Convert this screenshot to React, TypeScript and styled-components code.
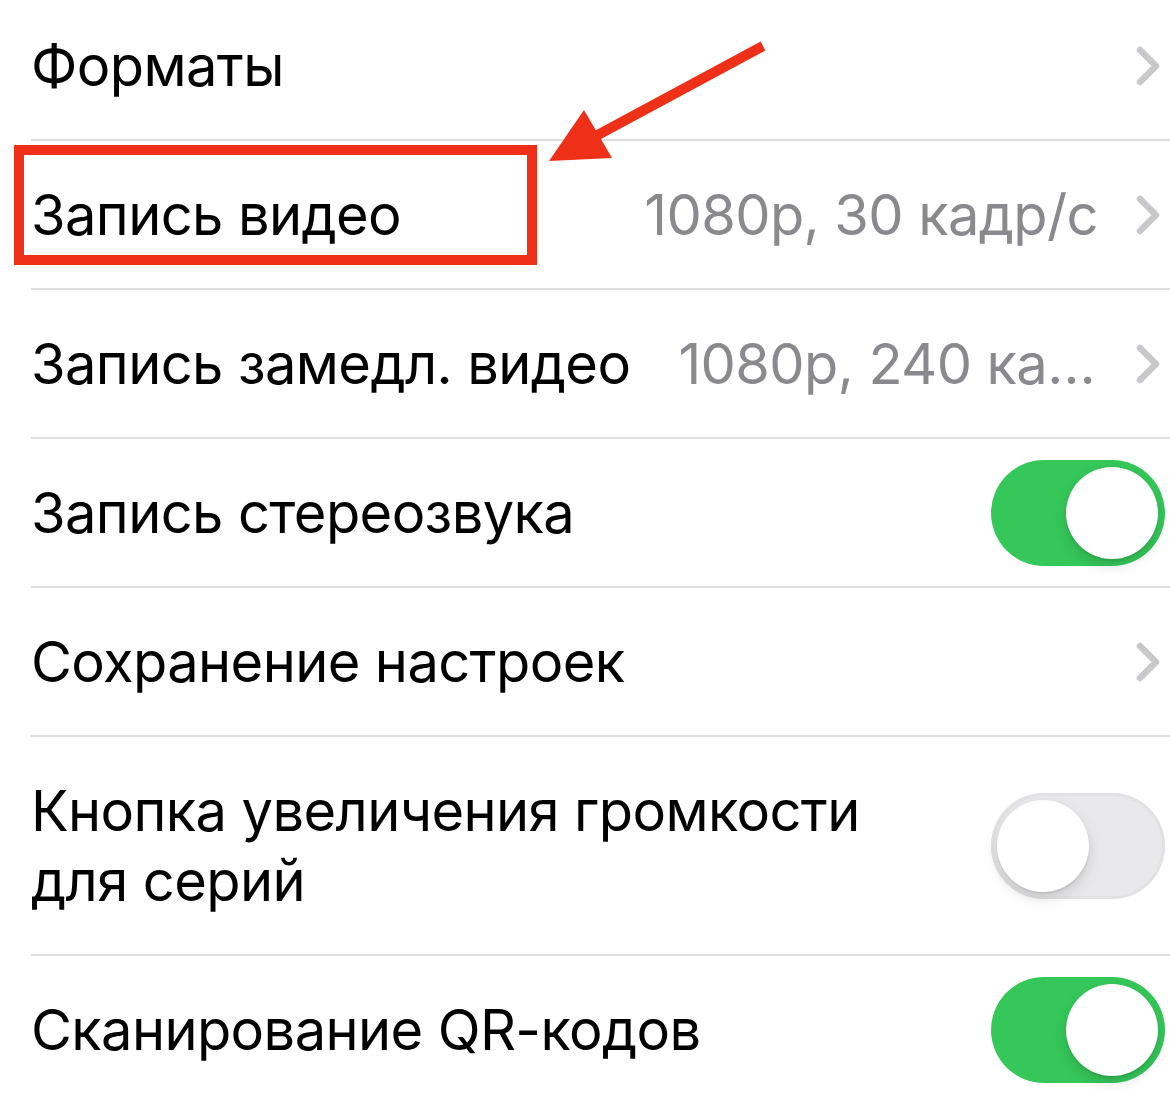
import styled, { createGlobalStyle } from 'styled-components';

/** types */
interface ISettingItem {
	id: string;
	title: string;
	value?: string;
	kind: 'link' | 'toggle';
	isOn?: boolean;
}

const ITEMS: ISettingItem[] = [
	{ id: 'formats', title: 'Форматы', kind: 'link' },
	{ id: 'video', title: 'Запись видео', value: '1080p, 30 кадр/с', kind: 'link' },
	{ id: 'slomo', title: 'Запись замедл. видео', value: '1080p, 240 кадр/с', kind: 'link' },
	{ id: 'stereo', title: 'Запись стереозвука', kind: 'toggle', isOn: true },
	{ id: 'preserve', title: 'Сохранение настроек', kind: 'link' },
	{ id: 'burst', title: 'Кнопка увеличения громкости для серий', kind: 'toggle', isOn: false },
	{ id: 'qr', title: 'Сканирование QR-кодов', kind: 'toggle', isOn: true },
];

/** style */
const GlobalStyle = createGlobalStyle`
	html, body {
		margin: 0;
		padding: 0;
		background: #ffffff;
		overflow: hidden;
	}
	body {
		font-family: Inter, 'Noto Sans', 'Liberation Sans', sans-serif;
		-webkit-font-smoothing: antialiased;
	}
`;

const Screen = styled.div`
	position: relative;
	width: 1170px;
	height: 1093px;
	overflow: hidden;
	background: #ffffff;
`;

const List = styled.ul`
	list-style: none;
	margin: -8px 0 0 31px;
	padding: 0;
`;

const Row = styled.li`
	display: flex;
	align-items: center;
	gap: 48px;
	min-height: 149px;
	box-sizing: border-box;
	border-bottom: 2px solid #dedee0;
`;

const Title = styled.span<{ $wrap: boolean }>`
	flex: ${p => (p.$wrap ? '1 1 auto' : '0 0 auto')};
	padding: 38.5px 0;
	font-size: 56px;
	line-height: 70px;
	letter-spacing: -0.6px;
	color: #000000;
	white-space: ${p => (p.$wrap ? 'normal' : 'nowrap')};
`;

const Accessory = styled.div`
	flex: 1 1 auto;
	min-width: 0;
	display: flex;
	align-items: center;
	justify-content: flex-end;
	gap: 38px;
	padding-right: 10px;
`;

const Value = styled.span`
	min-width: 0;
	overflow: hidden;
	text-overflow: ellipsis;
	white-space: nowrap;
	font-size: 56px;
	line-height: 70px;
	letter-spacing: -0.6px;
	color: #8a8a8e;
`;

const Chevron = styled.svg`
	flex: 0 0 auto;
	width: 24px;
	height: 40px;
`;

const Track = styled.div<{ $on: boolean }>`
	flex: 0 0 auto;
	position: relative;
	width: 174px;
	height: 106px;
	margin-right: -5px;
	border-radius: 53px;
	box-sizing: border-box;
	background: ${p => (p.$on ? '#35c759' : '#e9e9eb')};
	box-shadow: ${p => (p.$on ? 'none' : 'inset 0 0 0 3px #e2e2e4')};
`;

const Knob = styled.div<{ $on: boolean }>`
	position: absolute;
	top: 7px;
	left: ${p => (p.$on ? '75px' : '6px')};
	width: 92px;
	height: 92px;
	border-radius: 50%;
	background: #ffffff;
	box-shadow: 0 6px 14px rgba(0, 0, 0, 0.14), 0 2px 2px rgba(0, 0, 0, 0.08);
`;

const Highlight = styled.div`
	position: absolute;
	left: 14px;
	top: 145px;
	width: 523px;
	height: 120px;
	box-sizing: border-box;
	border: 10px solid #ee3018;
	pointer-events: none;
`;

const Arrow = styled.svg`
	position: absolute;
	left: 540px;
	top: 36px;
	width: 232px;
	height: 132px;
	pointer-events: none;
`;

/** Component: стрелка вправо */
const ChevronIcon = () => (
	<Chevron viewBox='0 0 24 40'>
		<polyline
			points='4,4 20,20 4,36'
			fill='none'
			stroke='#c7c7cc'
			strokeWidth='6.5'
			strokeLinecap='round'
			strokeLinejoin='round'
		/>
	</Chevron>
);

/** Component: переключатель */
const Toggle: React.FC<{ isOn: boolean }> = ({ isOn }) => (
	<Track $on={isOn} role='switch' aria-checked={isOn}>
		<Knob $on={isOn} />
	</Track>
);

/** Component: строка настроек */
const SettingRow: React.FC<{ item: ISettingItem }> = ({ item }) => (
	<Row>
		<Title $wrap={item.kind === 'toggle'}>{item.title}</Title>
		<Accessory>
			{item.value && <Value>{item.value}</Value>}
			{item.kind === 'link' ? <ChevronIcon /> : <Toggle isOn={!!item.isOn} />}
		</Accessory>
	</Row>
);

const App = () => {
	return (
		<Screen>
			<GlobalStyle />
			<List>
				{ITEMS.map(item => (
					<SettingRow key={item.id} item={item} />
				))}
			</List>

			{/* аннотации поверх скриншота */}
			<Highlight />
			<Arrow viewBox='0 0 232 132'>
				<line x1='223' y1='10' x2='54' y2='101' stroke='#ee3018' strokeWidth='10' />
				<polygon points='9,125 44,74 72,122' fill='#ee3018' />
			</Arrow>
		</Screen>
	);
};

export default App;
